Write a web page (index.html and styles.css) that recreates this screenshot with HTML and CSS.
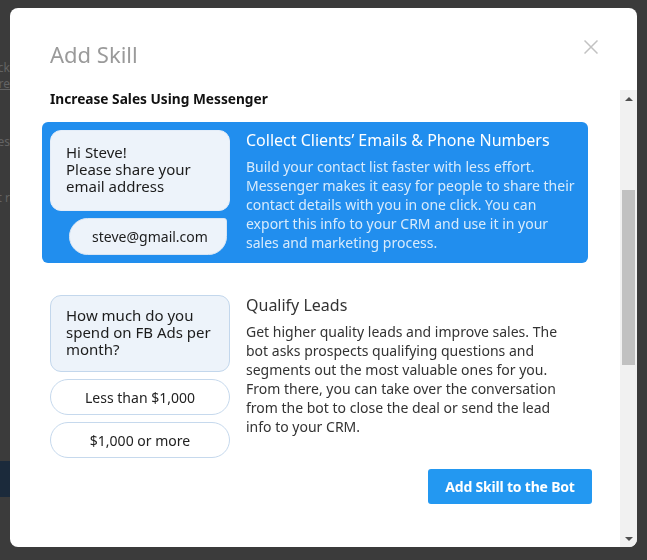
FILE: index.html
```html
<!DOCTYPE html>
<html>
<head>
<meta charset="utf-8">
<link rel="stylesheet" href="styles.css">
</head>
<body>
<div class="page">
  <div class="bg-line">Click</div>
  <div class="bg-line bg-link">Learn more</div>
  <div class="bg-line bg-gap1">sales</div>
  <div class="bg-line bg-gap2">get r</div>
  <div class="bg-bar"></div>
</div>

<div class="modal">
  <div class="modal-header">
    <h1 class="modal-title">Add Skill</h1>
    <svg class="close" width="14" height="14" viewBox="0 0 14 14"><path d="M0.5 0.5L13.5 13.5M13.5 0.5L0.5 13.5" stroke="#c2c2c2" stroke-width="1.5" fill="none"/></svg>
  </div>
  <div class="modal-body">
    <div class="content">
      <h2 class="subtitle">Increase Sales Using Messenger</h2>

      <div class="skill skill-active">
        <div class="chat">
          <div class="bubble bubble-first">Hi Steve!<br>Please share your<br>email address</div>
          <div class="reply">steve@gmail.com</div>
        </div>
        <div class="info">
          <h3 class="info-title">Collect Clients’ Emails &amp; Phone Numbers</h3>
          <p class="info-text">Build your contact list faster with less effort. Messenger makes it easy for people to share their contact details with you in one click. You can export this info to your CRM and use it in your sales and marketing process.</p>
        </div>
      </div>

      <div class="skill">
        <div class="chat">
          <div class="bubble bubble-second">How much do you<br>spend on FB Ads per<br>month?</div>
          <div class="option">Less than $1,000</div>
          <div class="option">$1,000 or more</div>
        </div>
        <div class="info">
          <h3 class="info-title">Qualify Leads</h3>
          <p class="info-text">Get higher quality leads and improve sales. The bot asks prospects qualifying questions and segments out the most valuable ones for you. From there, you can take over the conversation from the bot to close the deal or send the lead info to your CRM.</p>
        </div>
      </div>

      <div class="actions">
        <button class="btn-add">Add Skill to the Bot</button>
      </div>
    </div>
    <div class="scrollbar">
      <div class="sb-arrow"><span class="tri-up"></span></div>
      <div class="sb-track"><div class="sb-thumb"></div></div>
      <div class="sb-arrow"><span class="tri-down"></span></div>
    </div>
  </div>
</div>
</body>
</html>
```
FILE: styles.css
```css
* { box-sizing: border-box; }
html, body { margin: 0; padding: 0; }
body {
  background: #3b3b3b;
  font-family: "Noto Sans", "Open Sans", sans-serif;
  width: 647px;
  height: 560px;
  overflow: hidden;
}

.page {
  padding-top: 60px;
  height: 560px;
}
.bg-line {
  width: 10px;
  display: flex;
  justify-content: flex-end;
  white-space: nowrap;
  font-size: 12px;
  line-height: 16px;
  color: #636363;
}
.bg-link { text-decoration: underline; }
.bg-gap1 { margin-top: 42px; }
.bg-gap2 { margin-top: 40px; }
.bg-bar {
  margin-top: 255px;
  width: 10px;
  height: 36px;
  background: #1b2a3b;
}

.modal {
  position: fixed;
  top: 8px;
  left: 10px;
  width: 627px;
  height: 539px;
  background: #fff;
  border-radius: 8px;
  overflow: hidden;
  display: flex;
  flex-direction: column;
}

.modal-header {
  height: 82px;
  flex: none;
  display: flex;
  justify-content: space-between;
  align-items: flex-start;
  padding: 31px 39px 0 40px;
}
.modal-title {
  margin: 0;
  font-size: 22px;
  line-height: 30px;
  font-weight: 400;
  color: #9a9a9a;
}
.close { margin-top: 1px; display: block; }

.modal-body {
  flex: 1;
  display: flex;
  min-height: 0;
}
.content {
  width: 610px;
  flex: none;
  padding: 0 32px;
}
.subtitle {
  margin: 0 0 14px 8px;
  font-size: 13.7px;
  line-height: 18px;
  font-weight: 700;
  color: #111;
}

.skill {
  display: flex;
  gap: 16px;
  padding: 8px;
  border-radius: 6px;
}
.skill + .skill { margin-top: 24px; }
.skill-active { background: #218eee; }

.chat {
  width: 180px;
  flex: none;
  display: flex;
  flex-direction: column;
  gap: 7px;
}
.bubble {
  background: #edf3fa;
  border: 1px solid #c3d7ec;
  border-radius: 11px;
  font-size: 15px;
  line-height: 17px;
  color: #1c1c1c;
  padding: 13px 15px 15px;
}
.bubble-first { border-color: #e4edf8; }
.bubble-second { padding: 11px 15px 13px; }

.reply {
  width: 158px;
  height: 37px;
  margin-left: 19px;
  background: #edf3fa;
  border: 1px solid #d8e5f3;
  border-radius: 19px 3px 19px 19px;
  display: flex;
  align-items: center;
  justify-content: center;
  font-size: 14px;
  color: #1c1c1c;
  padding-left: 4px;
}
.option {
  height: 36px;
  background: #fff;
  border: 1px solid #c6d9ed;
  border-radius: 18px;
  display: flex;
  align-items: center;
  justify-content: center;
  font-size: 14px;
  color: #222;
}

.info { flex: 1; min-width: 0; padding-right: 4px; }
.info-title {
  margin: 0;
  font-size: 16px;
  line-height: 20px;
  font-weight: 400;
  color: #333;
}
.info-text {
  margin: 7px 0 0;
  font-size: 14px;
  line-height: 19px;
  color: #333;
}
.skill-active .info-title { color: #fff; }
.skill-active .info-text { color: rgba(255, 255, 255, 0.82); }

.actions {
  display: flex;
  justify-content: flex-end;
  margin: 3px -4px 0 0;
}
.btn-add {
  width: 164px;
  height: 35px;
  border: none;
  border-radius: 3px;
  background: #2398f1;
  color: #fff;
  font-family: "Noto Sans", sans-serif;
  font-size: 14px;
  font-weight: 700;
  letter-spacing: -0.2px;
  padding: 0;
}

.scrollbar {
  width: 17px;
  flex: none;
  background: #f1f1f1;
  display: flex;
  flex-direction: column;
}
.sb-arrow {
  height: 17px;
  flex: none;
  display: flex;
  align-items: center;
  justify-content: center;
}
.tri-up, .tri-down {
  width: 0;
  height: 0;
  border-left: 4px solid transparent;
  border-right: 4px solid transparent;
}
.tri-up { border-bottom: 4px solid #505050; }
.tri-down { border-top: 4px solid #505050; }
.sb-track { flex: 1; padding: 83px 2px 0; }
.sb-thumb { height: 175px; background: #c1c1c1; }
```
